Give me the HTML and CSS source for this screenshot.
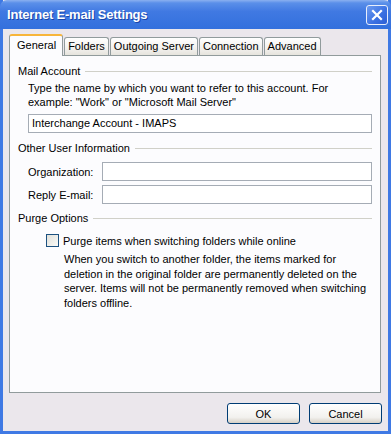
FILE: index.html
```html
<!DOCTYPE html>
<html lang="en">

<head>
    <meta charset="utf-8">
    <title>Internet E-mail Settings</title>
    <link rel="stylesheet" href="styles.css">
</head>

<body>
    <div class="window">
        <div class="titlebar">
            <span class="title">Internet E-mail Settings</span>
            <button class="close">
                <svg width="20" height="18" viewBox="0 0 20 18">
                    <path d="M6 5 L14 13 M14 5 L6 13" stroke="#fff" stroke-width="2.2" stroke-linecap="square"/>
                </svg>
            </button>
        </div>
        <div class="content">
            <div class="tabs">
                <div class="tab active">General</div>
                <div class="tab">Folders</div>
                <div class="tab">Outgoing Server</div>
                <div class="tab">Connection</div>
                <div class="tab">Advanced</div>
            </div>
            <div class="panel">
                <div class="group">Mail Account</div>
                <div class="indent">
                    <p class="help">Type the name by which you want to refer to this account. For<br>example: "Work" or "Microsoft Mail Server"</p>
                    <div class="field wide">Interchange Account - IMAPS</div>
                </div>

                <div class="group">Other User Information</div>
                <div class="indent">
                    <div class="row">
                        <label>Organization:</label>
                        <div class="field"></div>
                    </div>
                    <div class="row">
                        <label>Reply E-mail:</label>
                        <div class="field"></div>
                    </div>
                </div>

                <div class="group">Purge Options</div>
                <div class="check">
                    <span class="box"></span>
                    <span>Purge items when switching folders while online</span>
                </div>
                <p class="note">When you switch to another folder, the items marked for<br>deletion in the original folder are permanently deleted on the<br>server. Items will not be permanently removed when switching<br>folders offline.</p>
            </div>
            <div class="buttons">
                <button class="btn">OK</button>
                <button class="btn">Cancel</button>
            </div>
        </div>
    </div>
</body>

</html>
```

FILE: styles.css
```css
body {
    margin: 0;
    padding: 0;
    font-family: 'Liberation Sans', Arial, sans-serif;
    font-size: 11px;
    color: #000;
}

.window {
    width: 391px;
    height: 434px;
    box-sizing: border-box;
    border-left: 3px solid #3f79e4;
    border-right: 3px solid #3f79e4;
    border-bottom: 3px solid #3f79e4;
    background-color: #ebe7ec;
    display: flex;
    flex-direction: column;
}

.titlebar {
    height: 29px;
    box-sizing: border-box;
    margin: 0 -3px;
    border-radius: 7px 7px 0 0;
    background: linear-gradient(#8ab0f0 0, #5a8fe9 3px, #4079e2 40%, #3370dd 100%);
    display: flex;
    align-items: center;
    justify-content: space-between;
    padding: 0 3px 0 7px;
}

.title {
    color: #fff;
    font-family: 'Liberation Sans', Arial, sans-serif;
    font-weight: bold;
    font-size: 13px;
    letter-spacing: -0.2px;
    text-shadow: 1px 1px 0 #1a45a8;
}

.close {
    width: 22px;
    height: 20px;
    padding: 0;
    border: 1px solid #e8eefc;
    border-radius: 3px;
    background: linear-gradient(135deg, #6c9bf0, #3a70e2 60%, #2d5fd4);
    display: flex;
    align-items: center;
    justify-content: center;
}

.content {
    flex: 1;
    padding: 5px 7px 0 6px;
    display: flex;
    flex-direction: column;
}

.tabs {
    display: flex;
    height: 21px;
    align-items: flex-end;
    position: relative;
    z-index: 1;
    padding-left: 1px;
}

.tab {
    height: 17px;
    line-height: 17px;
    padding: 0 3px;
    margin-right: 1px;
    border: 1px solid #919b9c;
    border-bottom: none;
    border-radius: 3px 3px 0 0;
    background: linear-gradient(#ffffff, #f3f1ee 60%, #e6e4dd);
}

.tab.active {
    height: 20px;
    line-height: 19px;
    margin-left: -1px;
    padding: 0 6px 0 7px;
    background: #fcfcfe;
    border-top: 2px solid #f7b53a;
    margin-bottom: -1px;
}

.panel {
    height: 338px;
    box-sizing: border-box;
    border: 1px solid #919b9c;
    background-color: #fcfcfe;
    padding: 9px 8px 0 8px;
}

.group {
    display: flex;
    align-items: center;
    height: 13px;
    line-height: 13px;
}

.group::after {
    content: "";
    flex: 1;
    margin-left: 5px;
    border-top: 1px solid #d0d0c8;
}

.indent {
    padding-left: 10px;
}

.help {
    margin: 3px 0 5px;
    line-height: 14px;
}

.field {
    height: 19px;
    box-sizing: border-box;
    border: 1px solid #a5acb5;
    background-color: #fff;
    line-height: 17px;
    padding-left: 3px;
    flex: 1;
}

.wide {
    margin-bottom: 9px;
}

.row {
    display: flex;
    align-items: center;
    margin-top: 4px;
}

.indent .row:first-child {
    margin-top: 7px;
}

.row label {
    width: 74px;
}

.indent .row:last-child {
    margin-bottom: 8px;
}

.check {
    display: flex;
    align-items: center;
    margin: 9px 0 0 28px;
}

.box {
    width: 11px;
    height: 11px;
    border: 1px solid #1c5180;
    background: linear-gradient(135deg, #e0e0da, #fafaf7);
    margin-right: 4px;
}

.note {
    margin: 5px 0 0 46px;
    line-height: 14.5px;
}

.buttons {
    display: flex;
    justify-content: flex-end;
    gap: 9px;
    margin-top: 10px;
    margin-right: -1px;
}

.btn {
    width: 73px;
    height: 21px;
    border: 1px solid #003c74;
    border-radius: 3px;
    background: linear-gradient(#ffffff, #f2f1ee 70%, #d6d0c5);
    font-family: 'Liberation Sans', Arial, sans-serif;
    font-size: 11px;
    color: #000;
    padding: 0;
}
```
